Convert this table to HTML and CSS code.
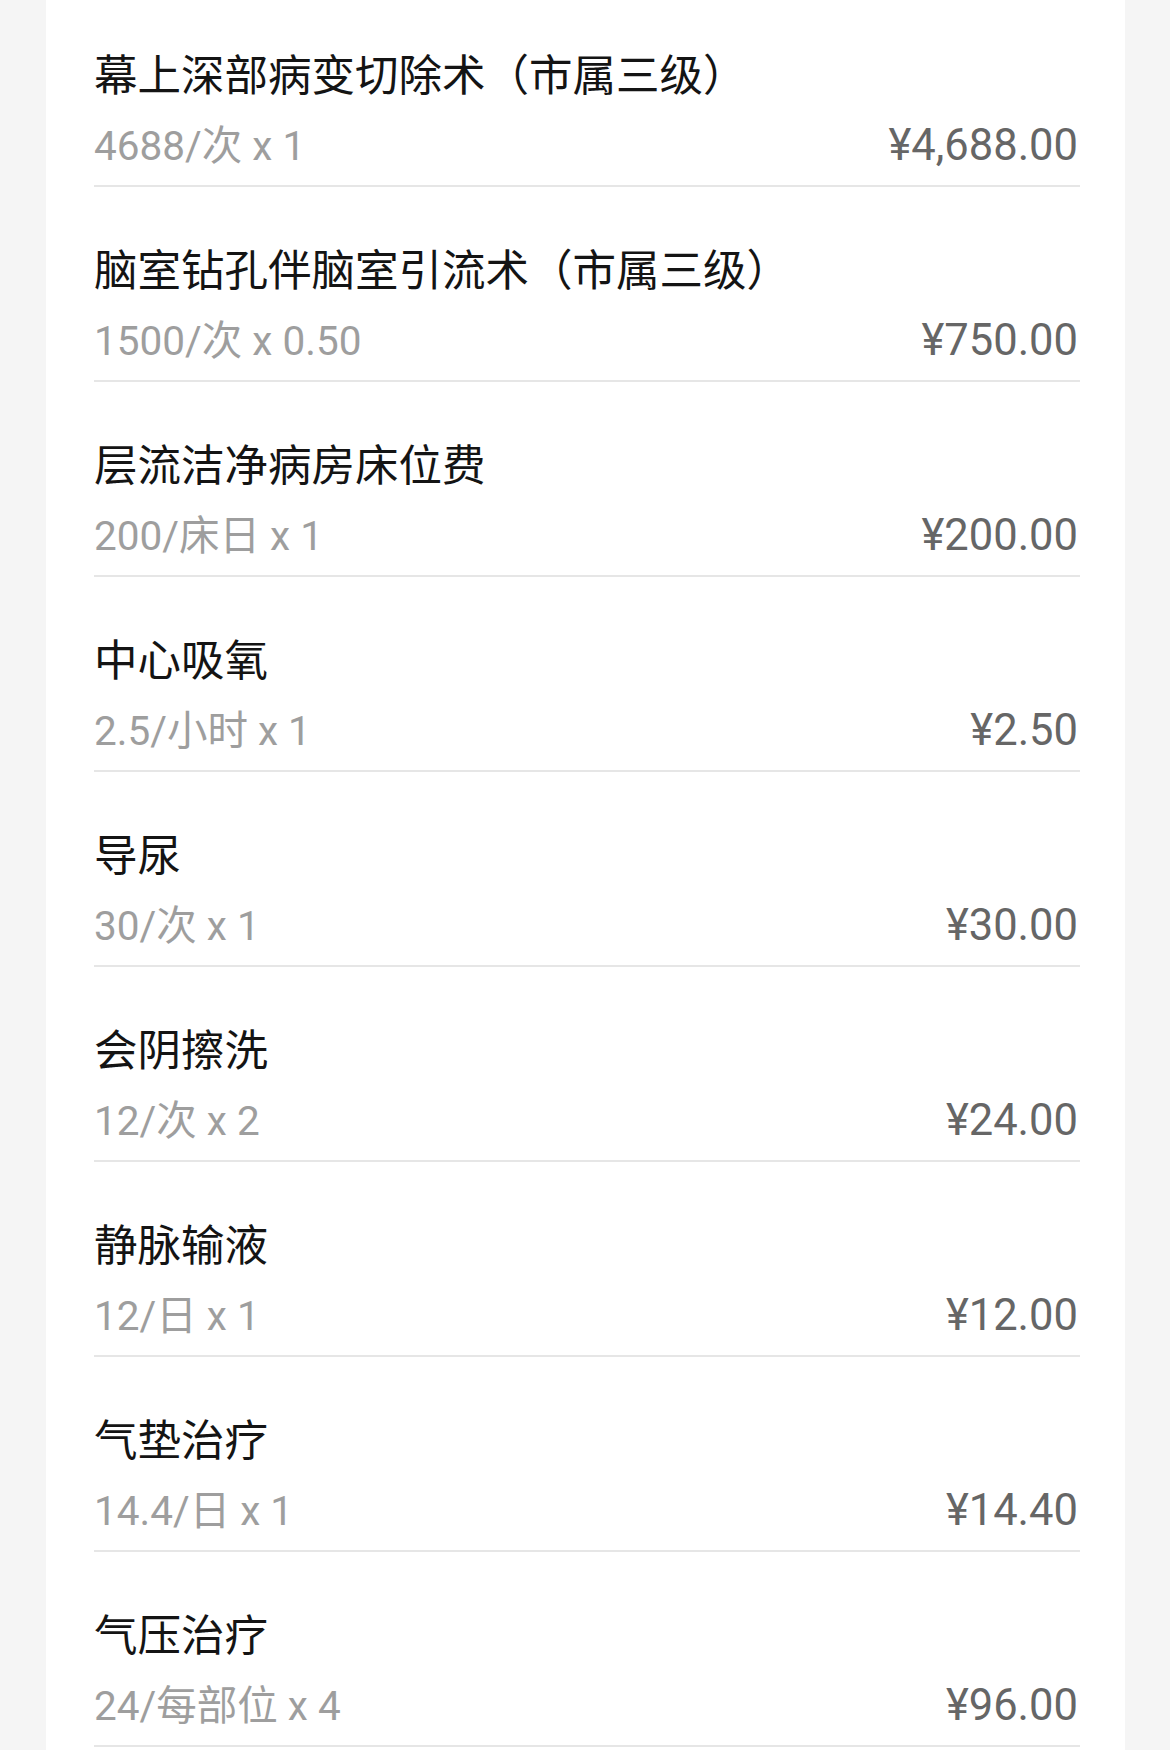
FILE: index.html
```html
<!DOCTYPE html>
<html lang="zh-CN">
<head>
<meta charset="utf-8">
<title>费用明细</title>
<link rel="stylesheet" href="styles.css">
</head>
<body>
<div class="card">
  <ul class="list">
    <li class="row">
      <div class="name">幕上深部病变切除术（市属三级）</div>
      <div class="meta"><span class="unit">4688/次 x 1</span><span class="price">¥4,688.00</span></div>
    </li>
    <li class="row">
      <div class="name">脑室钻孔伴脑室引流术（市属三级）</div>
      <div class="meta"><span class="unit">1500/次 x 0.50</span><span class="price">¥750.00</span></div>
    </li>
    <li class="row">
      <div class="name">层流洁净病房床位费</div>
      <div class="meta"><span class="unit">200/床日 x 1</span><span class="price">¥200.00</span></div>
    </li>
    <li class="row">
      <div class="name">中心吸氧</div>
      <div class="meta"><span class="unit">2.5/小时 x 1</span><span class="price">¥2.50</span></div>
    </li>
    <li class="row">
      <div class="name">导尿</div>
      <div class="meta"><span class="unit">30/次 x 1</span><span class="price">¥30.00</span></div>
    </li>
    <li class="row">
      <div class="name">会阴擦洗</div>
      <div class="meta"><span class="unit">12/次 x 2</span><span class="price">¥24.00</span></div>
    </li>
    <li class="row">
      <div class="name">静脉输液</div>
      <div class="meta"><span class="unit">12/日 x 1</span><span class="price">¥12.00</span></div>
    </li>
    <li class="row">
      <div class="name">气垫治疗</div>
      <div class="meta"><span class="unit">14.4/日 x 1</span><span class="price">¥14.40</span></div>
    </li>
    <li class="row">
      <div class="name">气压治疗</div>
      <div class="meta"><span class="unit">24/每部位 x 4</span><span class="price">¥96.00</span></div>
    </li>
  </ul>
</div>
</body>
</html>
```

FILE: styles.css
```css
html, body {
  margin: 0;
  padding: 0;
  background: #f5f5f5;
}
body {
  font-family: Roboto, "Noto Sans CJK SC", sans-serif;
  overflow: hidden;
  height: 1750px;
}
.card {
  margin: -8px 45px 0 46px;
  background: #ffffff;
  padding: 0 45px 0 48px;
  min-height: 1800px;
}
.list {
  list-style: none;
  margin: 0;
  padding: 0;
}
.row {
  display: flex;
  flex-direction: column;
  gap: 15px;
  padding: 52px 0 10px;
  border-bottom: 2px solid #e6e6e6;
}
.name {
  font-family: "Noto Sans CJK SC", sans-serif;
  font-size: 43.5px;
  line-height: 58px;
  color: #141414;
  white-space: nowrap;
}
.meta {
  display: flex;
  justify-content: space-between;
  align-items: baseline;
  line-height: 58px;
}
.unit {
  font-size: 40.5px;
  color: #9e9e9e;
}
.price {
  font-size: 43.5px;
  padding-right: 2px;
  color: #666666;
}
```
